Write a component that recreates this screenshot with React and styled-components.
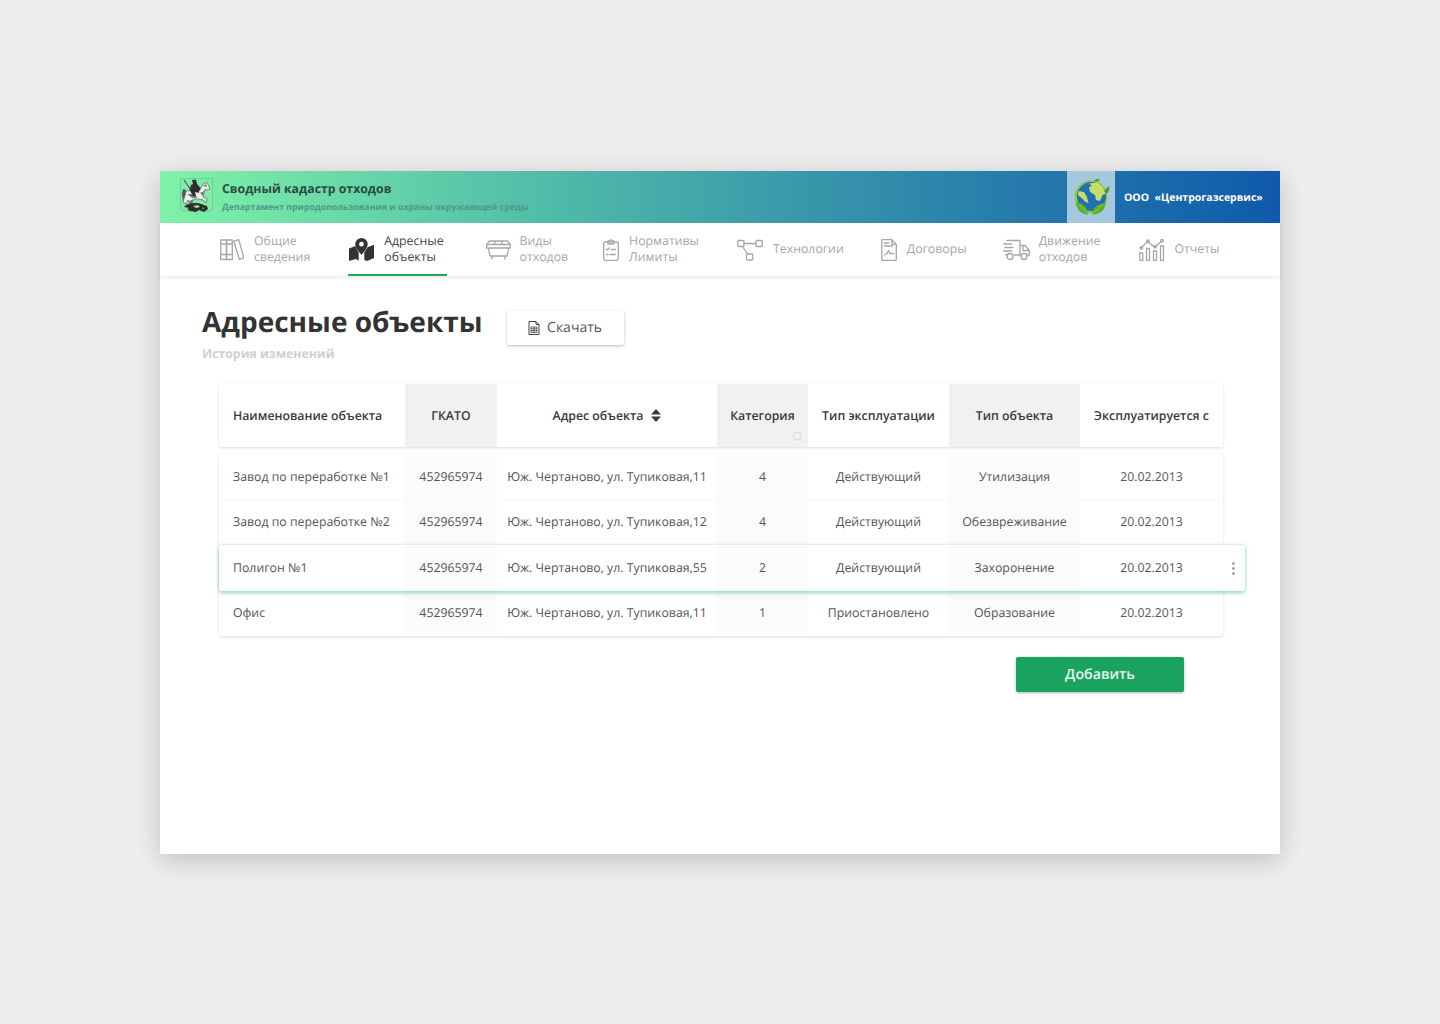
import React from 'react';
import styled, { createGlobalStyle } from 'styled-components';

const Global = createGlobalStyle`
  html, body { margin: 0; padding: 0; background: #eeeeee; }
  body { font-family: "Open Sans", "Noto Sans", sans-serif; min-height: 1024px; text-rendering: geometricPrecision; }
  * { box-sizing: border-box; }
`;

const Page = styled.div`
  padding-top: 171px;
  height: 1024px;
`;
const Frame = styled.div`
  width: 1120px;
  height: 683px;
  margin: 0 auto;
  background: #fff;
  box-shadow: 0 6px 26px rgba(0, 0, 0, 0.2);
`;
const Header = styled.header`
  height: 52px;
  display: flex;
  align-items: center;
  padding-left: 20px;
  background: linear-gradient(90deg, #7ff3a8 0%, #4fb9a9 36%, #2e87ab 68%, #0f5aab 100%);
`;
const Brand = styled.div`
  display: flex;
  align-items: center;
  gap: 9px;
  flex: 1;
`;
const BrandText = styled.div`
  display: flex;
  flex-direction: column;
  gap: 4px;
  margin-top: -1px;
`;
const BrandTitle = styled.div`
  font-size: 12.3px;
  line-height: 16px;
  font-weight: 700;
  color: #2f4a42;
`;
const BrandSub = styled.div`
  font-size: 8.8px;
  line-height: 12px;
  font-weight: 700;
  color: #4c9a85;
`;
const GlobeBox = styled.div`
  width: 48px;
  height: 52px;
  background: #a6c8de;
  display: flex;
  align-items: center;
  justify-content: center;
`;
const Company = styled.div`
  width: 165px;
  padding-left: 9px;
  padding-top: 1px;
  font-size: 10.5px;
  font-weight: 700;
  color: #fff;
  white-space: pre;
`;
const Nav = styled.nav`
  height: 53px;
  display: flex;
  padding: 0 60px;
  box-shadow: 0 2px 3px rgba(0, 0, 0, 0.08);
`;
const NavItem = styled.div`
  display: flex;
  align-items: center;
  gap: ${(p) => p.$gap}px;
  height: 53px;
  margin-left: ${(p) => p.$offset}px;
  padding: 0 ${(p) => (p.$active ? 3 : 0)}px 0 ${(p) => (p.$active ? 1 : 0)}px;
  color: ${(p) => (p.$active ? '#444' : '#a6a6a6')};
  border-bottom: 2px solid ${(p) => (p.$active ? '#1fa862' : 'transparent')};
  border-top: 2px solid transparent;
`;
const NavLabel = styled.div`
  font-size: 12.3px;
  line-height: 16px;
  white-space: pre-line;
  margin-top: -2px;
`;
const Main = styled.main`
  padding: 27px 0 0 42px;
`;
const TitleRow = styled.div`
  display: flex;
  align-items: flex-start;
  height: 42px;
`;
const Title = styled.h1`
  margin: 0;
  font-size: 28px;
  line-height: 38px;
  font-weight: 700;
  color: #333;
`;
const DownloadButton = styled.button`
  margin: 8px 0 0 24px;
  width: 117px;
  height: 34px;
  padding: 0 0 1px;
  border: 0;
  border-radius: 2px;
  background: #fff;
  box-shadow: 0 1px 3px rgba(0, 0, 0, 0.28);
  display: flex;
  align-items: center;
  justify-content: center;
  gap: 7px;
  font-family: inherit;
  font-size: 14px;
  color: #555;
  text-rendering: geometricPrecision;
`;
const History = styled.div`
  font-size: 12.3px;
  line-height: 18px;
  font-weight: 700;
  color: #cfcfcf;
`;
const Table = styled.div`
  width: 1004px;
  margin: 21px 0 0 17px;
`;
const COLUMNS = '186px 92px 220px 91px 141px 131px 143px';
const HeadRow = styled.div`
  display: grid;
  grid-template-columns: ${COLUMNS};
  height: 63px;
  box-shadow: 0 1px 3px rgba(0, 0, 0, 0.14);
  border-radius: 2px;
  background: #fff;
`;
const HeadCell = styled.div`
  position: relative;
  display: flex;
  align-items: center;
  justify-content: ${(p) => (p.$left ? 'flex-start' : 'center')};
  gap: 8px;
  padding-left: ${(p) => (p.$left ? 14 : 0)}px;
  padding-bottom: 1px;
  font-size: 12.3px;
  font-weight: 600;
  color: #3a3a3a;
  white-space: nowrap;
  background: ${(p) => (p.$shade ? '#f1f1f1' : 'transparent')};
`;
const SearchMark = styled.span`
  position: absolute;
  right: 4px;
  bottom: 4px;
  display: flex;
`;
const Body = styled.div`
  margin-top: 7px;
  background: #fff;
  border-radius: 2px;
  box-shadow: 0 1px 3px rgba(0, 0, 0, 0.14);
`;
const Row = styled.div`
  position: relative;
  display: grid;
  grid-template-columns: ${COLUMNS};
  height: 45.5px;
  ${(p) =>
    p.$selected
      ? `
    z-index: 1;
    margin-right: -22px;
    padding-right: 22px;
    background: #fff;
    border-radius: 2px;
    box-shadow: 0 2px 4px rgba(30, 170, 110, 0.42), 0 0 3px rgba(30, 170, 110, 0.28);
  `
      : ''}
`;
const Cell = styled.div`
  display: flex;
  align-items: center;
  justify-content: ${(p) => (p.$left ? 'flex-start' : 'center')};
  padding-left: ${(p) => (p.$left ? 14 : 0)}px;
  padding-bottom: 1px;
  font-size: 12.3px;
  color: #555;
  white-space: nowrap;
  background: ${(p) => (p.$shade ? '#fbfbfb' : 'transparent')};
  box-shadow: ${(p) => (p.$line ? 'inset 0 -1px 0 #f5f9f7' : 'none')};
`;
const Kebab = styled.span`
  position: absolute;
  right: 10px;
  top: 17px;
  display: flex;
  flex-direction: column;
  gap: 2px;
  i {
    display: block;
    width: 3px;
    height: 3px;
    border-radius: 50%;
    background: #a3a3a3;
  }
`;
const AddRow = styled.div`
  width: 965px;
  margin-top: 21px;
  display: flex;
  justify-content: flex-end;
`;
const AddButton = styled.button`
  width: 168px;
  height: 35px;
  padding: 0;
  border: 0;
  border-radius: 2px;
  background: #1aa35f;
  box-shadow: 0 1px 3px rgba(0, 0, 0, 0.3);
  color: #e9f7ef;
  font-family: inherit;
  font-size: 14.2px;
  font-weight: 600;
  text-rendering: geometricPrecision;
`;

const Crest = () => (
  <svg width="33" height="38" viewBox="0 0 33 38">
    <path d="M.5 .5H32.5V30Q32.5 33 29 33H20L16.5 37 13 33H4Q.5 33 .5 30Z" fill="#80eaa9" stroke="#66c592" strokeWidth=".7" />
    <path d="M3 23l2-6 1-5-3-1-1 5z" fill="#555" />
    <path d="M6 14C10 11 16 12 20 12L23 6 27 4.500 30 11 27 12 25 11 24 15 23 19 27 21 26 25 23 22 19 21 14 21 12 24 14 28 11 28 8 22 6 26 3 24 5 18Z" fill="#f0f0ec" stroke="#4a4a4a" strokeWidth=".6" />
    <path d="M7 16l5 4 5 0-2-4zM20 15l3 3 1-5zM23 8l3-2 1 3zM14 21l-2 3 2 4-3 0-2-5z" fill="#777" />
    <path d="M12 2 16 1.500 17 6 20.500 10 18.500 15 15 14 16 18 13 18 9.500 12 11 7 13 6z" fill="#2e2e2e" />
    <path d="M4 2l9 13" stroke="#333" strokeWidth="1" />
    <path d="M6 27c4-2 11-3 15-1l6 2 1 3-4 3-5-2-3 2-6-1-3-2 2-1-5-1z" fill="#2b302b" />
    <path d="M13 28l5-1 2 2-4 1zM22 30l2-.5 0 1.500z" fill="#a8dcb0" />
  </svg>
);
const Globe = () => (
  <svg width="38" height="38" viewBox="0 0 38 38">
    <circle cx="19" cy="19" r="16.5" fill="#8ccb3c" />
    <circle cx="19.5" cy="18.5" r="14.5" fill="#1c70b5" />
    <path d="M17 5.500l8-1 6 4.500 2.500 7-3 1-2.500 6-4-1-1-5-5-3-1-5 3-1zM6.500 13l5.500 1 3 5 1.500 6-3-1-4-4-3.500-3z" fill="#c9dd66" />
    <path d="M16 36.500c-7-.5-12-5-12-12 6 0 12.500 5 12 12zM21 36.500c-2-5 3-10 12.500-12 0 7-5 12-12.500 12z" fill="#5fae2d" />
    <path d="M6.500 26c3 3 6 6 8.500 9M31 26c-3 3-6 6-8.500 8.500" stroke="#a8d757" strokeWidth=".7" fill="none" />
    <path d="M22 3c2-2.500 4-2.500 6-1.500-1 2-4 3-6 1.500zM33 13c1-3 3-4.500 4.500-4.500 0 3-1 5.500-3 7.500z" fill="#4c9b2c" />
  </svg>
);
const line = { fill: 'none', stroke: 'currentColor', strokeWidth: 1.3, strokeLinejoin: 'round', strokeLinecap: 'round' };
const Books = () => (
  <svg width="24" height="22" viewBox="0 0 24 22" {...line}>
    <rect x=".7" y="1" width="5.8" height="19.5" />
    <rect x="6.5" y="1" width="5.8" height="19.5" />
    <path d="M.7 5h11.6M.7 15.5h11.6M13.8 2.2l5-1.6 5 18.2-4.400 1.600z" />
  </svg>
);
const MapPin = () => (
  <svg width="25" height="23" viewBox="0 0 25 23">
    <path fillRule="evenodd" d="M12.500 0a6.200 6.200 0 0 1 6.200 6.200c0 3.200-3.600 7.800-6.200 10.600C9.900 14 6.300 9.400 6.300 6.200A6.200 6.200 0 0 1 12.500 0zm0 3.800a2.400 2.400 0 1 0 0 4.800 2.400 2.400 0 0 0 0-4.800z" fill="#333" />
    <path d="M0 10.500l6.500-2.400c.6 2 2 4.300 3.200 6.200v8.400L6.800 21 0 23zM15.300 14.300c1.200-1.600 2.400-3.200 3.200-5l6.500-2.600V20l-7 3-2.700-1z" fill="#333" />
  </svg>
);
const Bin = () => (
  <svg width="25" height="20" viewBox="0 0 25 20" {...line}>
    <path d="M3.500 1h18l2.800 3.500v3.500H.7V4.500zM.7 4.500h23.600M9 1v3.500M16 1v3.500M2.500 8l1.500 8h17l1.500-8M6 16v3M19 16v3" />
  </svg>
);
const Clip = () => (
  <svg width="16" height="22" viewBox="0 0 16 22" {...line}>
    <rect x=".7" y="3" width="14.6" height="18.3" rx="1.5" />
    <path d="M5 3V1.800h1.700a1.400 1.400 0 0 1 2.600 0H11V5H5zM3.500 10l1 1 1.600-2M8 10.500h4.500M3.500 15.500h1.500M7 15.500h5.500" />
  </svg>
);
const Nodes = () => (
  <svg width="26" height="22" viewBox="0 0 26 22" {...line}>
    <rect x=".7" y="1.500" width="6.300" height="6" rx="1" />
    <rect x="19" y="1.500" width="6.300" height="6" rx="1" />
    <rect x="9.500" y="15" width="6.300" height="6" rx="1" />
    <path d="M7 4.500h12M5.500 7.500l5 7.500" />
  </svg>
);
const Doc = () => (
  <svg width="16" height="22" viewBox="0 0 16 22" {...line}>
    <path d="M1.800.7h9l4.500 4.700v15a1 1 0 0 1-1 1H1.800a1 1 0 0 1-1-1V1.700a1 1 0 0 1 1-1zM10.800.7v4.700h4.500M3.500 4h4.500M3.500 7h8M3.500 16l2.500-1.500 1.500-3 1.500 3h3.500" />
  </svg>
);
const Truck = () => (
  <svg width="27" height="22" viewBox="0 0 27 22" {...line}>
    <path d="M4 1.500h13v14.500H11M17 6.500h5l4.300 5v4.500h-2.800M17 16h1.500M20 6.500v5h6.300M.7 5h8M2 8.500h8M.7 12h8M3 15v1h.5" />
    <circle cx="7" cy="17.500" r="3" />
    <circle cx="21" cy="17.500" r="3" />
  </svg>
);
const Chart = () => (
  <svg width="26" height="22" viewBox="0 0 26 22" {...line}>
    <rect x=".8" y="14" width="3" height="7.500" />
    <rect x="7.500" y="9.500" width="3" height="12" />
    <rect x="14.500" y="12" width="3" height="9.500" />
    <rect x="21.500" y="7" width="3" height="14.500" />
    <path d="M2.500 8.500l6-6 7 5.500 7.500-6" />
    <circle cx="2.300" cy="9" r="1.300" />
    <circle cx="9" cy="2.200" r="1.300" />
    <circle cx="16" cy="7.800" r="1.300" />
    <circle cx="23" cy="1.700" r="1.300" />
  </svg>
);
const SheetIcon = () => (
  <svg width="12" height="14" viewBox="0 0 12 14" fill="none" stroke="#444" strokeWidth="1">
    <path d="M1 .5h7l3 3v10H1zM8 .5v3h3" />
    <path d="M3 6h6v5.500H3zM3 7.800h6M3 9.600h6M6 6v5.500" strokeWidth=".8" />
  </svg>
);
const Sort = () => (
  <svg width="10" height="13" viewBox="0 0 10 13" fill="#3a3a3a">
    <path d="M5 0l5 5.500H0zM5 13L0 7.500h10z" />
  </svg>
);
const Loupe = () => (
  <svg width="12" height="12" viewBox="0 0 12 12" fill="none" stroke="#dcdcdc" strokeWidth="1">
    <circle cx="5" cy="5" r="4" />
    <path d="M8 8l3.500 3.500" />
  </svg>
);

const navItems = [
  { icon: <Books />, label: 'Общие\nсведения', gap: 10, offset: 0 },
  { icon: <MapPin />, label: 'Адресные\nобъекты', active: true, gap: 10, offset: 38 },
  { icon: <Bin />, label: 'Виды\nотходов', gap: 9, offset: 39 },
  { icon: <Clip />, label: 'Нормативы\nЛимиты', gap: 10, offset: 35 },
  { icon: <Nodes />, label: 'Технологии', gap: 10, offset: 38 },
  { icon: <Doc />, label: 'Договоры', gap: 10, offset: 37 },
  { icon: <Truck />, label: 'Движение\nотходов', gap: 9, offset: 36 },
  { icon: <Chart />, label: 'Отчеты', gap: 9, offset: 39 },
];
const heads = ['Наименование объекта', 'ГКАТО', 'Адрес объекта', 'Категория', 'Тип эксплуатации', 'Тип объекта', 'Эксплуатируется с'];
const rows = [
  ['Завод по переработке №1', '452965974', 'Юж. Чертаново, ул. Тупиковая,11', '4', 'Действующий', 'Утилизация', '20.02.2013'],
  ['Завод по переработке №2', '452965974', 'Юж. Чертаново, ул. Тупиковая,12', '4', 'Действующий', 'Обезвреживание', '20.02.2013'],
  ['Полигон №1', '452965974', 'Юж. Чертаново, ул. Тупиковая,55', '2', 'Действующий', 'Захоронение', '20.02.2013'],
  ['Офис', '452965974', 'Юж. Чертаново, ул. Тупиковая,11', '1', 'Приостановлено', 'Образование', '20.02.2013'],
];
const shaded = (i) => i === 1 || i === 3 || i === 5;

export default function App() {
  return (
    <>
      <Global />
      <Page>
        <Frame>
          <Header>
            <Brand>
              <Crest />
              <BrandText>
                <BrandTitle>Сводный кадастр отходов</BrandTitle>
                <BrandSub>Департамент природопользования и охраны окружающей среды</BrandSub>
              </BrandText>
            </Brand>
            <GlobeBox>
              <Globe />
            </GlobeBox>
            <Company>{'ООО  «Центрогазсервис»'}</Company>
          </Header>
          <Nav>
            {navItems.map((n) => (
              <NavItem key={n.label} $active={n.active} $gap={n.gap} $offset={n.offset}>
                {n.icon}
                <NavLabel>{n.label}</NavLabel>
              </NavItem>
            ))}
          </Nav>
          <Main>
            <TitleRow>
              <Title>Адресные объекты</Title>
              <DownloadButton>
                <SheetIcon />
                Скачать
              </DownloadButton>
            </TitleRow>
            <History>История изменений</History>
            <Table>
              <HeadRow>
                {heads.map((h, i) => (
                  <HeadCell key={h} $left={i === 0} $shade={shaded(i)}>
                    {h}
                    {i === 2 && <Sort />}
                    {i === 3 && (
                      <SearchMark>
                        <Loupe />
                      </SearchMark>
                    )}
                  </HeadCell>
                ))}
              </HeadRow>
              <Body>
                {rows.map((r, ri) => (
                  <Row key={ri} $selected={ri === 2}>
                    {r.map((c, i) => (
                      <Cell key={i} $left={i === 0} $shade={shaded(i)} $line={ri === 0}>
                        {c}
                      </Cell>
                    ))}
                    {ri === 2 && (
                      <Kebab>
                        <i />
                        <i />
                        <i />
                      </Kebab>
                    )}
                  </Row>
                ))}
              </Body>
              <AddRow>
                <AddButton>Добавить</AddButton>
              </AddRow>
            </Table>
          </Main>
        </Frame>
      </Page>
    </>
  );
}
